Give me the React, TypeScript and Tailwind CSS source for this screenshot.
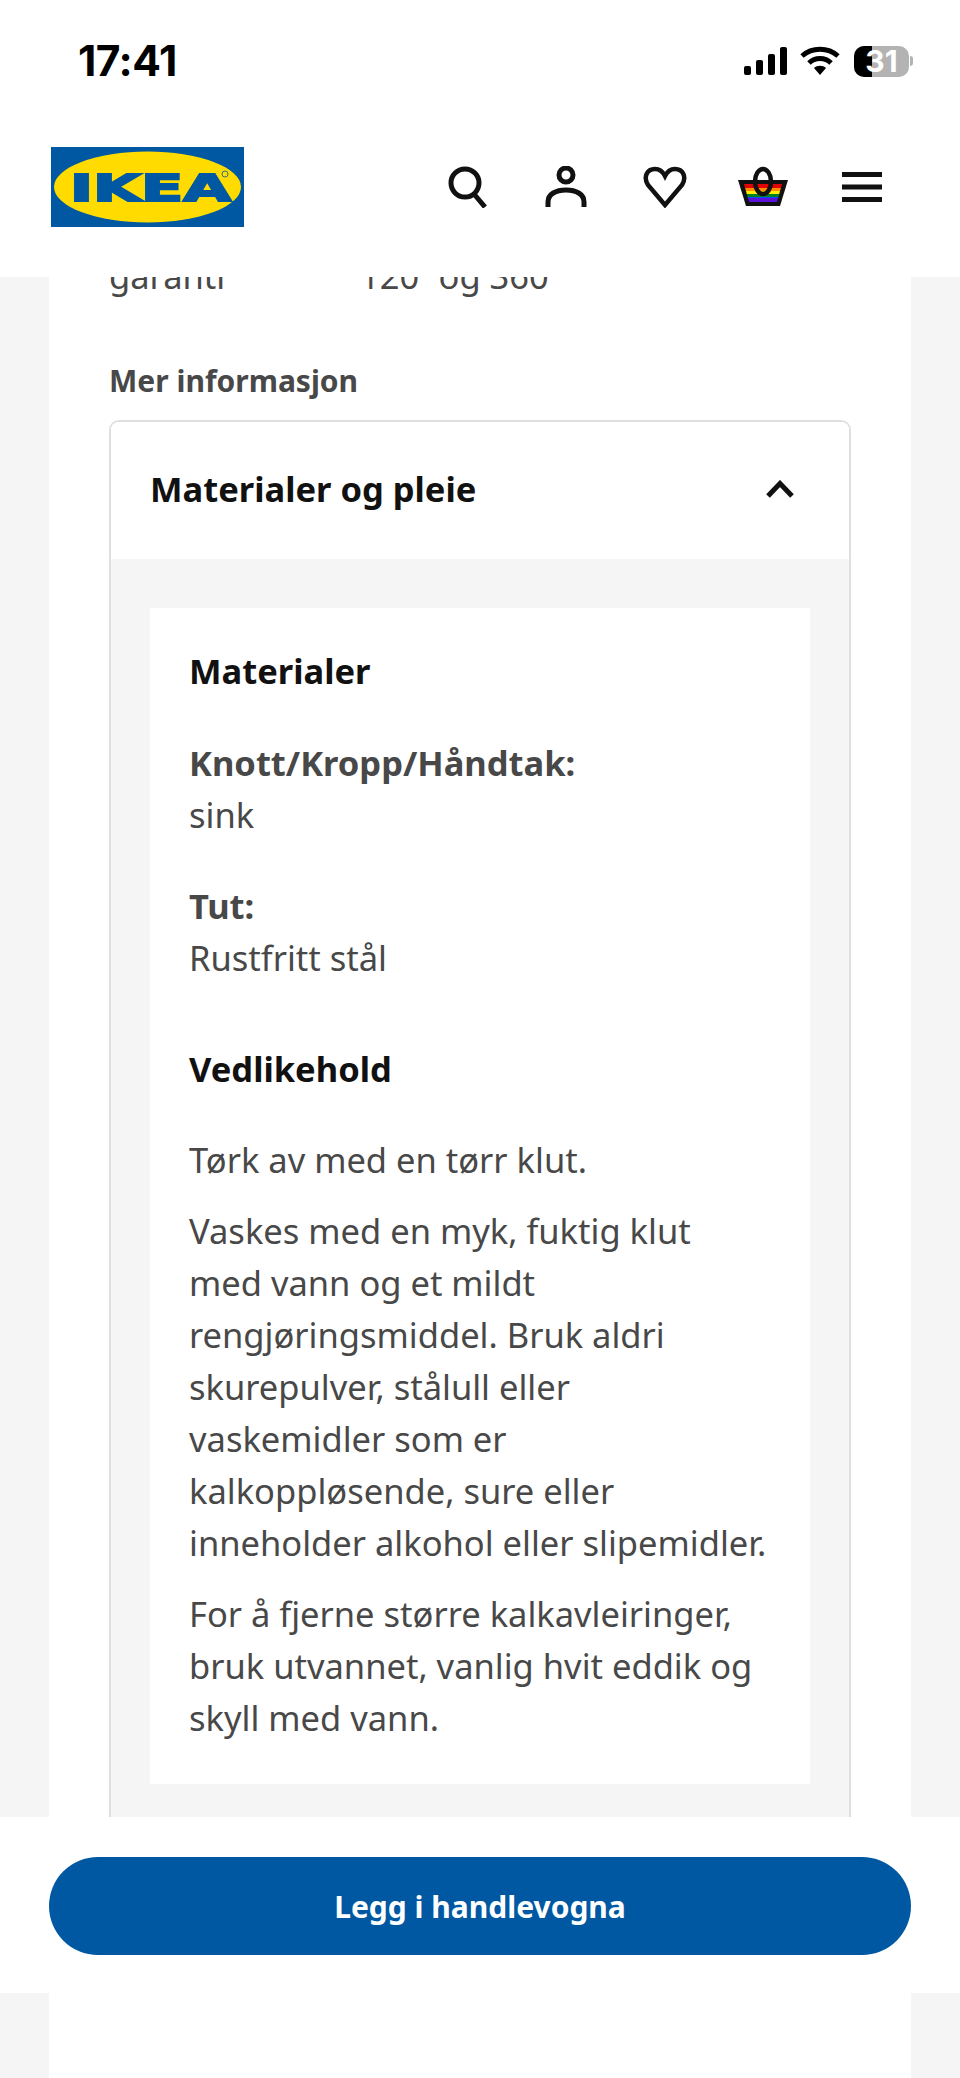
const noto = { fontFamily: '"Noto Sans", sans-serif' };

function StatusIcons() {
    return (
        <div className="flex items-center">
            <svg width="43" height="28" viewBox="0 0 43 28">
                <rect x="0" y="19" width="7" height="9" rx="2" fill="#000" />
                <rect x="12" y="13" width="7" height="15" rx="2" fill="#000" />
                <rect x="24" y="7" width="7" height="21" rx="2" fill="#000" />
                <rect x="36" y="0" width="7" height="28" rx="2" fill="#000" />
            </svg>
            <svg width="40" height="30" viewBox="0 0 40 30" className="ml-[13px]">
                <path d="M2 10 C12 1 28 1 38 10" fill="none" stroke="#000" strokeWidth="5" />
                <path d="M9 17 C15 11 25 11 31 17" fill="none" stroke="#000" strokeWidth="5" />
                <path d="M14 22 C17 19 23 19 26 22 L20 29 Z" fill="#000" />
            </svg>
            <div className="relative ml-[14px] w-[55px] h-[31px] rounded-[10px] bg-[#b3b3b3] overflow-hidden">
                <div className="absolute left-0 top-0 bottom-0 w-[18px] bg-black" />
                <span className="absolute inset-0 flex items-center justify-center text-[30px] font-bold text-white leading-none" style={{ fontFamily: 'Inter, sans-serif' }}>
                    31
                </span>
            </div>
            <div className="ml-[1px] w-[3px] h-[10px] rounded-r-full bg-[#b3b3b3]" />
        </div>
    );
}

function IkeaLogo() {
    return (
        <svg width="193" height="80" viewBox="0 0 193 80">
            <rect width="193" height="80" fill="#0058a3" />
            <ellipse cx="96.5" cy="40" rx="93.5" ry="35.5" fill="#ffdb00" />
            <text x="19" y="53.5" textLength="161" lengthAdjust="spacingAndGlyphs" fontFamily="DejaVu Sans" fontWeight="700" fontSize="38" fill="#0058a3" stroke="#0058a3" strokeWidth="2">
                IKEA
            </text>
            <circle cx="174" cy="27" r="3" fill="none" stroke="#0058a3" strokeWidth="0.8" />
        </svg>
    );
}

function HeaderIcon({ children }: { children: React.ReactNode }) {
    return <div className="w-[98.5px] flex justify-center">{children}</div>;
}

function HeaderIcons() {
    return (
        <div className="flex items-center">
            <HeaderIcon>
                <svg width="42" height="42" viewBox="0 0 42 42" fill="none" stroke="#111" strokeWidth="5">
                    <circle cx="18" cy="17" r="14" />
                    <path d="M27 28 L38 41" />
                </svg>
            </HeaderIcon>
            <HeaderIcon>
                <svg width="42" height="42" viewBox="0 0 42 42" fill="none" stroke="#111" strokeWidth="5">
                    <circle cx="21" cy="9" r="7" />
                    <path d="M3 41 V36 C3 28 11 24 21 24 C31 24 39 28 39 36 V41" />
                </svg>
            </HeaderIcon>
            <HeaderIcon>
                <svg width="44" height="42" viewBox="0 0 44 42" fill="none" stroke="#111" strokeWidth="4.5">
                    <path d="M22 39 L5 19 C0 11 4 3 12 3 C17 3 20 6 22 10 C24 6 27 3 32 3 C40 3 44 11 39 19 Z" />
                </svg>
            </HeaderIcon>
            <HeaderIcon>
                <svg width="52" height="42" viewBox="0 0 52 42">
                    <defs>
                        <clipPath id="basket-clip">
                            <path d="M7 18 H45 L40 36 H12 Z" />
                        </clipPath>
                    </defs>
                    <path d="M1 14 H51 L43 40 H9 Z" fill="#111" />
                    <g clipPath="url(#basket-clip)">
                        <rect x="0" y="18" width="52" height="4" fill="#e40303" />
                        <rect x="0" y="22" width="52" height="3" fill="#ff8c00" />
                        <rect x="0" y="25" width="52" height="3" fill="#ffed00" />
                        <rect x="0" y="28" width="52" height="3" fill="#008026" />
                        <rect x="0" y="31" width="52" height="1" fill="#004dff" />
                        <rect x="0" y="32" width="52" height="4" fill="#5a10d8" />
                    </g>
                    <ellipse cx="26" cy="15.5" rx="8" ry="12.5" fill="none" stroke="#111" strokeWidth="4.5" />
                </svg>
            </HeaderIcon>
            <HeaderIcon>
                <svg width="42" height="42" viewBox="0 0 42 42" fill="#111">
                    <rect x="1" y="6" width="40" height="5" />
                    <rect x="1" y="18.5" width="40" height="5" />
                    <rect x="1" y="31" width="40" height="5" />
                </svg>
            </HeaderIcon>
        </div>
    );
}

export default function App() {
    return (
        <div className="h-[2078px] w-[960px] flex flex-col overflow-hidden bg-[#f5f5f5]" style={noto}>
            <header className="h-[277px] shrink-0 bg-white">
                <div className="flex items-center justify-between pt-[42px] pl-[78px] pr-[47px]">
                    <span className="text-[42.5px] font-bold leading-[38px] tracking-[-0.5px] text-black" style={{ fontFamily: 'Inter, sans-serif' }}>17:41</span>
                    <StatusIcons />
                </div>
                <div className="flex items-center justify-between mt-[67px] pl-[51px] pr-[49px]">
                    <IkeaLogo />
                    <HeaderIcons />
                </div>
            </header>

            <main className="h-[1540px] shrink-0 mx-[49px] bg-white overflow-hidden px-[60px]">
                <div className="flex mt-[-27px] text-[34.5px] leading-[52px] text-[#484848]">
                    <span className="w-[251px]">garanti</span>
                    <span>120˚ og 360˚</span>
                </div>
                <h2 className="mt-[57px] text-[30px] leading-[44px] font-bold text-[#484848]">Mer informasjon</h2>
                <div className="mt-[17px] border-2 border-b-0 border-[#dfdfdf] rounded-t-[10px] overflow-hidden">
                    <div className="h-[137px] flex items-center justify-between pl-[39px] pr-[55px] pb-[4px] bg-white">
                        <span className="text-[34.5px] font-bold text-[#111]">Materialer og pleie</span>
                        <svg width="28" height="18" viewBox="0 0 28 18" fill="none" stroke="#111" strokeWidth="5">
                            <path d="M2 16 L14 3.5 L26 16" />
                        </svg>
                    </div>
                    <div className="bg-[#f5f5f5] px-[39px] pt-[49px] pb-[80px]">
                        <div className="bg-white pl-[39px] pr-[42px] pt-[37px] pb-[40px] text-[34.5px] leading-[52px] text-[#484848]">
                            <h3 className="font-bold text-[#111]">Materialer</h3>
                            <p className="mt-[40px] font-bold">Knott/Kropp/Håndtak:</p>
                            <p>sink</p>
                            <p className="mt-[39px] font-bold">Tut:</p>
                            <p>Rustfritt stål</p>
                            <h3 className="mt-[59px] font-bold text-[#111]">Vedlikehold</h3>
                            <p className="mt-[39px]">Tørk av med en tørr klut.</p>
                            <p className="mt-[19px]">Vaskes med en myk, fuktig klut med vann og et mildt rengjøringsmiddel. Bruk aldri skurepulver, stålull eller vaskemidler som er kalkoppløsende, sure eller inneholder alkohol eller slipemidler.</p>
                            <p className="mt-[19px]">For å fjerne større kalkavleiringer, bruk utvannet, vanlig hvit eddik og skyll med vann.</p>
                        </div>
                    </div>
                </div>
            </main>

            <footer className="h-[176px] shrink-0 bg-white px-[49px] pt-[40px]">
                <button className="w-full h-[98px] rounded-full bg-[#0058a3] text-white text-[30px] font-bold">
                    Legg i handlevogna
                </button>
            </footer>

            <div className="flex-1 mx-[49px] bg-white" />
        </div>
    );
}
